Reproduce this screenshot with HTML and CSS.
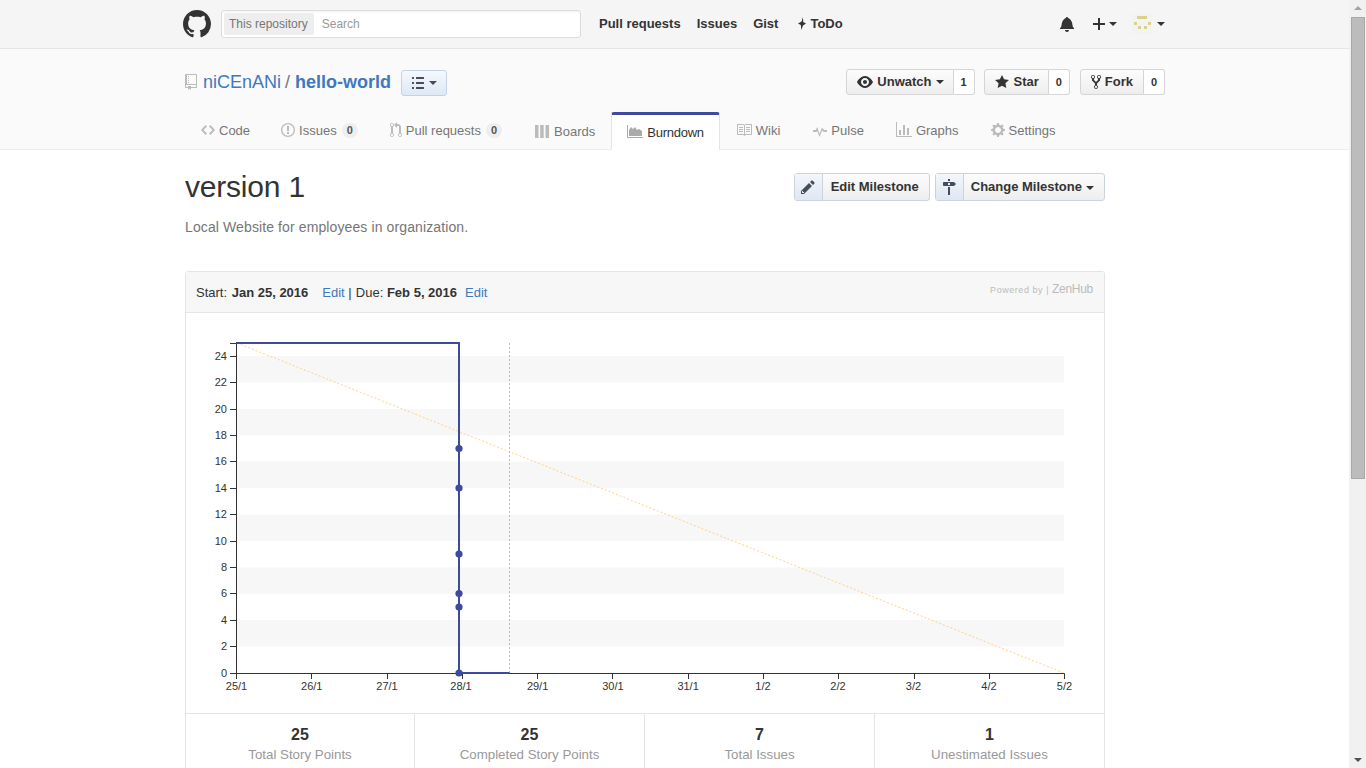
FILE: index.html
```html
<!DOCTYPE html>
<html>
<head>
	<title>version 1 - Burndown</title>
	<link rel="stylesheet" href="styles.css">
</head>
<body>
	<svg class="defs" width="0" height="0">
		<symbol id="i-mark" viewBox="0 0 16 16"><path d="M8 0C3.58 0 0 3.58 0 8c0 3.54 2.29 6.53 5.47 7.59.4.07.55-.17.55-.38 0-.19-.01-.82-.01-1.49-2.01.37-2.53-.49-2.69-.94-.09-.23-.48-.94-.82-1.13-.28-.15-.68-.52-.01-.53.63-.01 1.08.58 1.23.82.72 1.21 1.87.87 2.33.66.07-.52.28-.87.51-1.07-1.78-.2-3.64-.89-3.64-3.95 0-.87.31-1.59.82-2.15-.08-.2-.36-1.02.08-2.12 0 0 .67-.21 2.2.82.64-.18 1.32-.27 2-.27.68 0 1.36.09 2 .27 1.53-1.04 2.2-.82 2.2-.82.44 1.1.16 1.92.08 2.12.51.56.82 1.27.82 2.15 0 3.07-1.87 3.75-3.65 3.95.29.25.54.73.54 1.48 0 1.07-.01 1.93-.01 2.2 0 .21.15.46.55.38A8.013 8.013 0 0016 8c0-4.42-3.58-8-8-8z"/></symbol>
		<symbol id="i-repo" viewBox="0 0 12 16"><path d="M4 9H3V8h1v1zm0-3H3v1h1V6zm0-2H3v1h1V4zm0-2H3v1h1V2zm8-1v12c0 .55-.45 1-1 1H6v2l-1.5-1.5L3 16v-2H1c-.55 0-1-.45-1-1V1c0-.55.45-1 1-1h10c.55 0 1 .45 1 1zm-1 10H1v2h2v-1h3v1h5v-2zm0-10H2v9h9V1z"/></symbol>
		<symbol id="i-code" viewBox="0 0 14 16"><path d="M9.5 3L8 4.5 11.5 8 8 11.5 9.5 13 14 8 9.5 3zm-5 0L0 8l4.5 5L6 11.5 2.5 8 6 4.5 4.5 3z"/></symbol>
		<symbol id="i-issue" viewBox="0 0 14 16"><path d="M7 2.3c3.14 0 5.7 2.56 5.7 5.7s-2.56 5.7-5.7 5.7A5.71 5.71 0 011.3 8c0-3.14 2.56-5.7 5.7-5.7zM7 1C3.14 1 0 4.14 0 8s3.14 7 7 7 7-3.14 7-7-3.14-7-7-7zm1 3H6v5h2V4zm0 6H6v2h2v-2z"/></symbol>
		<symbol id="i-pr" viewBox="0 0 12 16"><path d="M11 11.28V5c-.03-.78-.34-1.47-.94-2.06C9.46 2.35 8.78 2.03 8 2H7V0L4 3l3 3V4h1c.27.02.48.11.69.31.21.2.3.42.31.69v6.28A1.993 1.993 0 0010 15a1.993 1.993 0 001-3.72zm-1 2.92c-.66 0-1.2-.55-1.2-1.2 0-.65.55-1.2 1.2-1.2.65 0 1.2.55 1.2 1.2 0 .65-.55 1.2-1.2 1.2zM4 3c0-1.11-.89-2-2-2a1.993 1.993 0 00-1 3.72v6.56A1.993 1.993 0 002 15a1.993 1.993 0 001-3.72V4.72c.59-.34 1-.98 1-1.72zm-.8 10c0 .66-.55 1.2-1.2 1.2-.65 0-1.2-.55-1.2-1.2 0-.65.55-1.2 1.2-1.2.65 0 1.2.55 1.2 1.2zM2 4.2C1.34 4.2.8 3.65.8 3c0-.65.55-1.2 1.2-1.2.65 0 1.2.55 1.2 1.2 0 .65-.55 1.2-1.2 1.2z"/></symbol>
		<symbol id="i-boards" viewBox="0 0 14 13"><path d="M0 0h3.5v13H0zM5.2 0h3.5v13H5.2zM10.5 0H14v13h-3.5z"/></symbol>
		<symbol id="i-burn" viewBox="0 0 16 13"><path d="M0 0h1v12h15v1H0z"/><path d="M2 11V5l2-3 2 2 2-2 2 3 2-1 3 2v5z"/></symbol>
		<symbol id="i-book" viewBox="0 0 16 16"><path d="M3 5h4v1H3V5zm0 3h4V7H3v1zm0 2h4V9H3v1zm11-5h-4v1h4V5zm0 2h-4v1h4V7zm0 2h-4v1h4V9zm2-6v9c0 .55-.45 1-1 1H9.5l-1 1-1-1H2c-.55 0-1-.45-1-1V3c0-.55.45-1 1-1h5.5l1 1 1-1H15c.55 0 1 .45 1 1zm-8 .5L7.5 3H2v9h6V3.5zm7-.5H9.5l-.5.5V12h6V3z"/></symbol>
		<symbol id="i-pulse" viewBox="0 0 14 16"><path d="M11.5 8L8.8 5.8 6.5 12 4.3 5 2.6 8H0v2h3.6l.6-1.1L6.5 15 9.2 8.4 10.7 10H14V8z"/></symbol>
		<symbol id="i-graph" viewBox="0 0 16 16"><path d="M16 14v1H0V0h1v14h15zM5 13H3V8h2v5zm4 0H7V3h2v10zm4 0h-2V6h2v7z"/></symbol>
		<symbol id="i-gear" viewBox="0 0 14 16"><path d="M14 8.77v-1.6l-1.94-.64-.45-1.09.88-1.84-1.13-1.13-1.81.91-1.09-.45-.69-1.92h-1.6l-.63 1.94-1.11.45-1.84-.88-1.13 1.13.91 1.81-.45 1.09L0 7.23v1.59l1.94.64.45 1.09-.88 1.84 1.13 1.13 1.81-.91 1.09.45.69 1.92h1.59l.63-1.94 1.11-.45 1.84.88 1.13-1.13-.92-1.81.47-1.09L14 8.75v.02zM7 11c-1.66 0-3-1.34-3-3s1.34-3 3-3 3 1.34 3 3-1.34 3-3 3z"/></symbol>
		<symbol id="i-eye" viewBox="0 0 16 16"><path d="M8.06 2C3 2 0 8 0 8s3 6 8.06 6C13 14 16 8 16 8s-3-6-7.94-6zM8 12c-2.2 0-4-1.78-4-4 0-2.2 1.8-4 4-4 2.22 0 4 1.8 4 4 0 2.22-1.78 4-4 4zm2-4c0 1.11-.89 2-2 2-1.11 0-2-.89-2-2 0-1.11.89-2 2-2 1.11 0 2 .89 2 2z"/></symbol>
		<symbol id="i-star" viewBox="0 0 14 16"><path d="M14 6l-4.9-.64L7 1 4.9 5.36 0 6l3.6 3.26L2.67 14 7 11.67 11.33 14l-.93-4.74L14 6z"/></symbol>
		<symbol id="i-fork" viewBox="0 0 10 16"><path d="M8 1a1.993 1.993 0 00-1 3.72V6L5 8 3 6V4.72A1.993 1.993 0 002 1a1.993 1.993 0 00-1 3.72V6.5l3 3v1.78A1.993 1.993 0 005 15a1.993 1.993 0 001-3.72V9.5l3-3V4.72A1.993 1.993 0 008 1zM2 4.2C1.34 4.2.8 3.65.8 3c0-.65.55-1.2 1.2-1.2.65 0 1.2.55 1.2 1.2 0 .65-.55 1.2-1.2 1.2zm3 10c-.66 0-1.2-.55-1.2-1.2 0-.65.55-1.2 1.2-1.2.65 0 1.2.55 1.2 1.2 0 .65-.55 1.2-1.2 1.2zm3-10c-.66 0-1.2-.55-1.2-1.2 0-.65.55-1.2 1.2-1.2.65 0 1.2.55 1.2 1.2 0 .65-.55 1.2-1.2 1.2z"/></symbol>
		<symbol id="i-bell" viewBox="0 0 14 16"><path d="M14 12v1H0v-1l.73-.58c.77-.77.81-2.55 1.19-4.42C2.69 3.23 6 2 6 2c0-.55.45-1 1-1s1 .45 1 1c0 0 3.39 1.23 4.16 5 .38 1.88.42 3.66 1.19 4.42l.66.58H14zm-7 4c1.11 0 2-.89 2-2H5c0 1.11.89 2 2 2z"/></symbol>
		<symbol id="i-plus" viewBox="0 0 12 16"><path d="M12 9H7v5H5V9H0V7h5V2h2v5h5v2z"/></symbol>
		<symbol id="i-pencil" viewBox="0 0 14 16"><path d="M0 12v3h3l8-8-3-3-8 8zm3 2H1v-2h1v1h1v1zm10.3-9.3L12 6 9 3l1.3-1.3a.996.996 0 011.41 0l1.59 1.59c.39.39.39 1.02 0 1.41z"/></symbol>
		<symbol id="i-sign" viewBox="0 0 14 16"><path d="M8 2H6V0h2v2zm4 5H2c-.55 0-1-.45-1-1V4c0-.55.45-1 1-1h10l2 2-2 2zM8 4H6v2h2V4zM6 16h2V8H6v8z"/></symbol>
		<symbol id="i-list" viewBox="0 0 12 16"><path d="M2 13c0 .59 0 1-.59 1H.59C0 14 0 13.59 0 13c0-.59 0-1 .59-1h.81c.59 0 .6.41.6 1zm2.59-9h6.81c.59 0 .6-.41.6-1 0-.59 0-1-.59-1H4.59C4 2 4 2.41 4 3c0 .59 0 1 .59 1zM1.41 7H.59C0 7 0 7.41 0 8c0 .59 0 1 .59 1h.81c.59 0 .6-.41.6-1 0-.59 0-1-.59-1zm0-5H.59C0 2 0 2.41 0 3c0 .59 0 1 .59 1h.81c.59 0 .6-.41.6-1 0-.59 0-1-.59-1zm10 5H4.59C4 7 4 7.41 4 8c0 .59 0 1 .59 1h6.81c.59 0 .6-.41.6-1 0-.59 0-1-.59-1zm0 5H4.59C4 12 4 12.41 4 13c0 .59 0 1 .59 1h6.81c.59 0 .6-.41.6-1 0-.59 0-1-.59-1z"/></symbol>
		<symbol id="i-zap" viewBox="0 0 8 13"><path d="M5 0L3.6 4.5 0 6.5l2.8 1.5L3.4 13 5 8.4 8 6.5 5.2 5z"/></symbol>
	</svg>

	<div class="page">
		<header class="topbar">
			<div class="wrap topbar-in">
				<svg class="mark"><use href="#i-mark"/></svg>
				<div class="search">
					<span class="scope">This repository</span>
					<span class="placeholder">Search</span>
				</div>
				<nav class="topnav">
					<a>Pull requests</a>
					<a>Issues</a>
					<a>Gist</a>
					<a class="todo"><svg class="zap"><use href="#i-zap"/></svg>ToDo</a>
				</nav>
				<div class="user-nav">
					<svg class="bell"><use href="#i-bell"/></svg>
					<span class="plus"><svg><use href="#i-plus"/></svg><i class="caret"></i></span>
					<span class="avatar-box">
						<svg class="avatar" viewBox="0 0 20 20">
							<rect width="20" height="20" fill="#f3f3f2"/>
							<rect x="5" y="2" width="10" height="3" fill="#d9d28f"/>
							<rect x="2" y="8" width="3" height="3" fill="#d9d28f"/>
							<rect x="16" y="8" width="3" height="3" fill="#d9d28f"/>
							<rect x="6" y="12" width="3" height="3" fill="#d9d28f"/>
							<rect x="12" y="12" width="3" height="3" fill="#d9d28f"/>
						</svg>
						<i class="caret"></i>
					</span>
				</div>
			</div>
		</header>

		<section class="repohead">
			<div class="wrap">
				<div class="repo-row">
					<h1 class="repo-title">
						<svg class="repo-icon"><use href="#i-repo"/></svg>
						<a>niCEnANi</a><span class="slash">/</span><a class="repo-name">hello-world</a>
					</h1>
					<button class="list-btn"><svg><use href="#i-list"/></svg><i class="caret"></i></button>
					<ul class="actions">
						<li><button class="btn"><svg class="ic-eye"><use href="#i-eye"/></svg>Unwatch<i class="caret"></i></button><span class="count">1</span></li>
						<li><button class="btn"><svg class="ic-star"><use href="#i-star"/></svg>Star</button><span class="count">0</span></li>
						<li><button class="btn"><svg class="ic-fork"><use href="#i-fork"/></svg>Fork</button><span class="count">0</span></li>
					</ul>
				</div>
				<nav class="tabs">
					<a class="tab tab-code"><svg class="t-code"><use href="#i-code"/></svg>Code</a>
					<a class="tab"><svg class="t-issue"><use href="#i-issue"/></svg>Issues<span class="counter">0</span></a>
					<a class="tab"><svg class="t-pr"><use href="#i-pr"/></svg>Pull requests<span class="counter">0</span></a>
					<a class="tab tab-boards"><svg class="t-boards"><use href="#i-boards"/></svg>Boards</a>
					<a class="tab selected"><svg class="t-burn"><use href="#i-burn"/></svg>Burndown</a>
					<a class="tab tab-wiki"><svg class="t-book"><use href="#i-book"/></svg>Wiki</a>
					<a class="tab"><svg class="t-pulse"><use href="#i-pulse"/></svg>Pulse</a>
					<a class="tab"><svg class="t-graph"><use href="#i-graph"/></svg>Graphs</a>
					<a class="tab"><svg class="t-gear"><use href="#i-gear"/></svg>Settings</a>
				</nav>
			</div>
		</section>

		<main class="wrap content">
			<div class="milestone-head">
				<h2 class="milestone-title">version 1</h2>
				<div class="milestone-btns">
					<button class="mbtn"><span class="mbtn-ic"><svg class="ic-pencil"><use href="#i-pencil"/></svg></span><span class="mbtn-txt">Edit Milestone</span></button>
					<button class="mbtn"><span class="mbtn-ic"><svg class="ic-sign"><use href="#i-sign"/></svg></span><span class="mbtn-txt">Change Milestone<i class="caret"></i></span></button>
				</div>
			</div>
			<p class="desc">Local Website for employees in organization.</p>

			<div class="card">
				<div class="card-head">
					<div class="dates">
						Start: <b class="start">Jan 25, 2016</b><a class="edit-a">Edit</a> <span class="sep">|</span> Due: <b>Feb 5, 2016</b><a class="edit-b">Edit</a>
					</div>
					<div class="powered">Powered by | <span class="zen">ZenHub</span></div>
				</div>

				<svg class="chart" viewBox="186 313 918 400" width="918" height="400">
					<g class="bands">
						<rect x="236" y="356" width="828" height="26.5"/>
						<rect x="236" y="409" width="828" height="26.5"/>
						<rect x="236" y="461.5" width="828" height="26.5"/>
						<rect x="236" y="514.5" width="828" height="26.5"/>
						<rect x="236" y="567.5" width="828" height="26.5"/>
						<rect x="236" y="620" width="828" height="26.5"/>
					</g>
					<g class="axis">
						<path d="M230 343.5H236.5V673.5H1064.5V679"/>
						<path d="M230 356.5h6M230 382.5h6M230 409.5h6M230 435.5h6M230 461.5h6M230 488.5h6M230 514.5h6M230 541.5h6M230 567.5h6M230 593.5h6M230 620.5h6M230 646.5h6M230 673.5h6"/>
						<path d="M236.5 673v6M311.5 673v6M387.5 673v6M462.5 673v6M537.5 673v6M612.5 673v6M688.5 673v6M763.5 673v6M838.5 673v6M914.5 673v6M989.5 673v6"/>
					</g>
					<g class="ylabels">
						<text x="227" y="360">24</text>
						<text x="227" y="386">22</text>
						<text x="227" y="413">20</text>
						<text x="227" y="439">18</text>
						<text x="227" y="465">16</text>
						<text x="227" y="492">14</text>
						<text x="227" y="518">12</text>
						<text x="227" y="545">10</text>
						<text x="227" y="571">8</text>
						<text x="227" y="597">6</text>
						<text x="227" y="624">4</text>
						<text x="227" y="650">2</text>
						<text x="227" y="677">0</text>
					</g>
					<g class="xlabels">
						<text x="236.5" y="690">25/1</text>
						<text x="311.8" y="690">26/1</text>
						<text x="387" y="690">27/1</text>
						<text x="461" y="690">28/1</text>
						<text x="537.6" y="690">29/1</text>
						<text x="612.9" y="690">30/1</text>
						<text x="688.1" y="690">31/1</text>
						<text x="763" y="690">1/2</text>
						<text x="838" y="690">2/2</text>
						<text x="913.5" y="690">3/2</text>
						<text x="989" y="690">4/2</text>
						<text x="1064.5" y="690">5/2</text>
					</g>
					<line class="ideal" x1="237" y1="343" x2="1064" y2="673"/>
					<line class="today" x1="509.5" y1="343" x2="509.5" y2="673"/>
					<path class="actual" d="M236 343H459V673H509.5"/>
					<g class="dots">
						<circle cx="459" cy="448.5" r="3.6"/>
						<circle cx="459" cy="488" r="3.6"/>
						<circle cx="459" cy="554" r="3.6"/>
						<circle cx="459" cy="593.5" r="3.6"/>
						<circle cx="459" cy="607" r="3.6"/>
						<circle cx="459" cy="673" r="3.6"/>
					</g>
				</svg>

				<div class="stats">
					<div class="stat"><strong>25</strong><span>Total Story Points</span></div>
					<div class="stat"><strong>25</strong><span>Completed Story Points</span></div>
					<div class="stat"><strong>7</strong><span>Total Issues</span></div>
					<div class="stat"><strong>1</strong><span>Unestimated Issues</span></div>
				</div>
			</div>
		</main>
	</div>

	<div class="scrollbar">
		<i class="arrow-up"></i>
		<div class="track"><div class="thumb"></div></div>
		<i class="arrow-down"></i>
	</div>
</body>
</html>
```

FILE: styles.css
```css
* { box-sizing: border-box; }
html, body { margin: 0; height: 768px; overflow: hidden; }
body {
	display: flex;
	font-family: "Liberation Sans", Arial, sans-serif;
	font-size: 13px;
	color: #333;
	background: #fff;
}
a { color: #4078c0; text-decoration: none; }
button { font-family: inherit; padding: 0; cursor: pointer; }
.defs { position: absolute; }
.page { flex: 1; min-width: 0; height: 768px; overflow: hidden; }
.wrap { width: 980px; margin: 0 auto; position: relative; left: 0.5px; }

.caret {
	display: inline-block;
	width: 0;
	height: 0;
	border: 4px solid transparent;
	border-top-color: #333;
	border-bottom: 0;
	margin-left: 5px;
	vertical-align: middle;
}

/* top bar */
.topbar { height: 49px; background: #f5f5f5; border-bottom: 1px solid #e5e5e5; }
.topbar-in { display: flex; align-items: center; height: 48px; }
.mark { width: 28px; height: 28px; margin: 0 10px 0 -2px; fill: #333; flex: none; }
.search {
	width: 360px;
	height: 28px;
	background: #fff;
	border: 1px solid #ddd;
	border-radius: 3px;
	padding: 2px;
	display: flex;
	align-items: center;
	font-size: 12px;
	box-shadow: inset 0 1px 2px rgba(0,0,0,.05);
}
.scope { background: #eee; height: 22px; line-height: 22px; padding: 0 6px 0 5px; color: #767676; border-radius: 2px; }
.placeholder { color: #999; margin-left: 8px; }
.topnav { display: flex; margin-left: 18px; padding-bottom: 1px; font-weight: bold; }
.topnav a { color: #333; margin-right: 16px; }
.topnav .todo { margin-left: 4px; display: flex; align-items: center; }
.zap { width: 8px; height: 13px; fill: #333; margin: 0 4px 0 0; }
.user-nav { margin-left: auto; display: flex; align-items: center; }
.bell { width: 14px; height: 16px; fill: #333; }
.plus { display: flex; align-items: center; margin-left: 19px; }
.plus svg { width: 12px; height: 16px; fill: #333; }
.plus .caret { margin-left: 4px; }
.avatar-box { display: flex; align-items: center; margin-left: 15px; }
.avatar { width: 20px; height: 20px; }

/* repo head */
.repohead { height: 101px; background: #fafafa; border-bottom: 1px solid #eee; }
.repo-row { display: flex; align-items: flex-start; height: 63px; padding-top: 20px; }
.repo-title { margin: 0; display: flex; align-items: center; height: 26px; font-size: 18px; font-weight: normal; color: #767676; }
.repo-icon { width: 12px; height: 16px; fill: #bbb; margin-right: 6px; }
.slash { margin: 0 5px 0 4px; }
.repo-name { font-weight: bold; }
.list-btn {
	margin: 1px 0 0 10px;
	width: 46px;
	height: 26px;
	background: linear-gradient(#f5f8fd, #dfe8f5);
	border: 1px solid #c5d2e4;
	border-radius: 3px;
	display: flex;
	align-items: center;
	justify-content: center;
}
.list-btn svg { width: 12px; height: 16px; fill: #444d5c; }
.list-btn .caret { border-top-color: #444d5c; }
.actions { list-style: none; margin: 0 0 0 auto; padding: 0; display: flex; }
.actions li { display: flex; margin-left: 10px; height: 26px; }
.actions li:nth-child(2) { margin-left: 9px; }
.btn {
	height: 26px;
	background: linear-gradient(#fcfcfc, #eee);
	border: 1px solid #d5d5d5;
	border-radius: 3px 0 0 3px;
	font-size: 13px;
	font-weight: bold;
	color: #333;
	padding: 0 9px 2px 10px;
	display: flex;
	align-items: center;
}
.actions li:last-child .btn { padding-right: 10px; }
.btn svg { fill: #333; margin: 2px 4px 0 0; flex: none; }
.btn .caret { margin: 2px 0 0 4px; }
.ic-eye { width: 16px; height: 16px; }
.btn .ic-star { width: 14px; height: 16px; margin-right: 5px; }
.ic-fork { width: 10px; height: 16px; }
.count {
	width: 21px;
	height: 26px;
	line-height: 24px;
	text-align: center;
	background: #fff;
	border: 1px solid #d5d5d5;
	border-left: 0;
	border-radius: 0 3px 3px 0;
	font-size: 11px;
	font-weight: bold;
}

.tabs { display: flex; height: 38px; }
.tab {
	display: flex;
	align-items: center;
	height: 38px;
	padding: 0 16px 2px;
	font-size: 13px;
	color: #767676;
}
.tab svg { fill: #bbb; margin-right: 4px; flex: none; }
.t-code { width: 14px; height: 16px; }
.t-issue { width: 14px; height: 16px; }
.t-pr { width: 12px; height: 16px; }
.tab .t-boards { width: 14px; height: 13px; margin-right: 5px; }
.t-burn { width: 16px; height: 13px; margin-top: -3px; }
.t-book { width: 16px; height: 16px; }
.t-pulse { width: 14px; height: 16px; }
.t-graph { width: 16px; height: 16px; }
.t-gear { width: 14px; height: 16px; }
.tab-code { padding-right: 15px; }
.tab-boards { padding: 0 16px 0 17px; }
.tab-wiki { padding-right: 17px; }
.counter {
	background: #eee;
	color: #555;
	border-radius: 20px;
	font-size: 11px;
	font-weight: bold;
	line-height: 14px;
	height: 15px;
	padding: 0 5px;
	margin-left: 5px;
}
.tab.selected {
	background: #fff;
	color: #333;
	border: 1px solid #e5e5e5;
	border-top: 3px solid #3d4a9e;
	border-bottom: 0;
	border-radius: 3px 3px 0 0;
	padding: 0 15px;
	letter-spacing: -0.25px;
}
.tab.selected svg { fill: #aaa; }

/* milestone */
.content { padding-right: 60px; }
.milestone-head { display: flex; justify-content: space-between; align-items: flex-start; padding-top: 20px; }
.milestone-title { margin: 0; font-size: 30px; font-weight: normal; line-height: 34px; letter-spacing: -0.2px; color: #333; }
.milestone-btns { display: flex; gap: 5px; margin-top: 3px; }
.mbtn {
	display: flex;
	height: 28px;
	background: linear-gradient(#fcfcfc, #eee);
	border: 1px solid #ccd3dc;
	border-radius: 3px;
	font-size: 13px;
	font-weight: bold;
	color: #333;
	padding: 0;
}
.mbtn-ic {
	width: 28px;
	height: 26px;
	background: linear-gradient(#f3f6fb, #dfe7f4);
	border-right: 1px solid #ccd3dc;
	display: flex;
	align-items: center;
	justify-content: center;
}
.mbtn-ic svg { width: 14px; height: 16px; fill: #444d5c; }
.mbtn-txt { line-height: 25px; padding: 0 10px 0 7px; }
.mbtn:first-child .mbtn-txt { padding-left: 8px; }
.mbtn-txt .caret { margin-left: 4px; }
.desc { margin: 13px 0 0; font-size: 14px; line-height: 20px; letter-spacing: 0.11px; color: #767676; }

.card { margin-top: 34px; border: 1px solid #e5e5e5; border-radius: 3px 3px 0 0; }
.card-head {
	display: flex;
	justify-content: space-between;
	height: 41px;
	background: #f7f7f7;
	border-bottom: 1px solid #e5e5e5;
	padding: 0 11px 0 10px;
	align-items: center;
}
.dates { font-size: 13px; color: #333; padding-top: 1px; }
.start { margin-left: 1px; }
.sep { color: #333; margin-right: 0.5px; }
.edit-a { margin-left: 14px; }
.edit-b { margin-left: 8px; }
.powered { font-size: 9px; color: #bbb; letter-spacing: 0.55px; padding-bottom: 6px; }
.zen { font-size: 12px; letter-spacing: -0.3px; }

.chart { display: block; font-size: 11px; }
.bands rect { fill: #f7f7f7; }
.axis path { fill: none; stroke: #333; stroke-width: 1; }
.chart text { fill: #333; }
.ylabels text { text-anchor: end; }
.xlabels text { text-anchor: middle; }
.ideal { stroke: #ffd28a; stroke-width: 1; stroke-dasharray: 2 2; }
.today { stroke: #b9aef2; stroke-width: 1; stroke-dasharray: 2 2; }
.actual { fill: none; stroke: #3d4a9e; stroke-width: 2; }
.dots circle { fill: #3d4a9e; }

.stats { display: grid; grid-template-columns: 229px 230px 230px 229px; border-top: 1px solid #e5e5e5; height: 60px; }
.stat { text-align: center; padding-top: 11px; border-right: 1px solid #e5e5e5; }
.stat:last-child { border-right: 0; }
.stat strong { display: block; font-size: 16px; line-height: 20px; color: #333; }
.stat span { display: block; font-size: 13.3px; line-height: 20px; color: #999; }

/* page scrollbar */
.scrollbar { width: 17px; height: 768px; flex: none; background: #f1f1f1; display: flex; flex-direction: column; align-items: center; }
.track { flex: 1; width: 100%; padding: 0 1px 0 2px; }
.thumb { width: 100%; height: 462px; background: #bcbcbc; border: 1px solid #a8a8a8; }
.arrow-up, .arrow-down { display: block; width: 0; height: 0; border-left: 4px solid transparent; border-right: 4px solid transparent; margin: 6px 0; }
.arrow-up { border-bottom: 4px solid #a3a3a3; margin-bottom: 7px; }
.arrow-down { border-top: 4px solid #505050; margin-top: 7px; }
```
